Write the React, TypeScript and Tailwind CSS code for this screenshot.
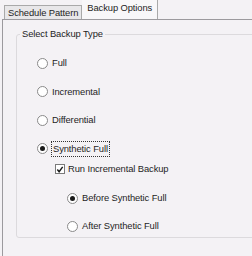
import React from "react";

function Radio({ checked }: { checked?: boolean }) {
  return (
    <span className="w-[11px] h-[11px] rounded-full border border-[#8a8a8a] bg-white flex items-center justify-center shrink-0">
      {checked && <span className="w-[5px] h-[5px] rounded-full bg-[#1a1a1a]" />}
    </span>
  );
}

function Check() {
  return (
    <span className="w-[10px] h-[10px] border border-[#7a7a7a] bg-white flex items-center justify-center shrink-0">
      <svg width="9" height="9" viewBox="0 0 9 9">
        <path d="M1.5 4.5L3.5 7L7.5 1.5" fill="none" stroke="#1a1a1a" strokeWidth="1.6" />
      </svg>
    </span>
  );
}

export default function App() {
  return (
    <div
      className="w-[252px] h-[256px] bg-[#f4f2f5] overflow-hidden text-[9.4px] tracking-[-0.1px] leading-[12px] text-[#1e1e1e] flex flex-col"
      style={{ fontFamily: "'Liberation Sans', Arial, sans-serif" }}
    >
      {/* Tabs */}
      <div className="h-[19px] flex items-end pl-[4px] shrink-0">
        <div className="h-[14px] px-[3px] border border-b-0 border-[#a9a9a9] bg-[#e8e7e9] flex items-center">
          Schedule Pattern
        </div>
        <div className="h-[20px] -mt-[1px] px-[5px] pb-[4px] border border-b-0 border-l-0 border-[#a9a9a9] bg-[#f8f7f9] flex items-center">
          Backup Options
        </div>
      </div>

      {/* Page */}
      <div className="flex-1 ml-[2px] border-t border-l border-[#9c9a9e] pt-[8px] pl-[13px]">
        <fieldset className="border border-[#dcdadd] rounded-[3px] w-[260px] h-[210px] pl-[3px]">
          <legend className="px-[2px]">Select Backup Type</legend>
          <div className="flex flex-col pt-[9px] -ml-[3px]">
            <div className="h-[28px] flex items-center gap-[4px] pl-[20px]">
              <Radio />
              <span>Full</span>
            </div>
            <div className="h-[29px] flex items-center gap-[4px] pl-[20px]">
              <Radio />
              <span>Incremental</span>
            </div>
            <div className="h-[28px] flex items-center gap-[4px] pl-[20px]">
              <Radio />
              <span>Differential</span>
            </div>
            <div className="h-[29px] flex items-center gap-[4px] pl-[20px]">
              <Radio checked />
              <span className="outline outline-1 outline-dotted outline-[#333] px-[1px] py-[1px]">Synthetic Full</span>
            </div>
            <div className="h-[12px] flex items-center gap-[3px] pl-[38px]">
              <Check />
              <span>Run Incremental Backup</span>
            </div>
            <div className="h-[28px] mt-[9px] flex items-center gap-[4px] pl-[50px]">
              <Radio checked />
              <span>Before Synthetic Full</span>
            </div>
            <div className="h-[28px] flex items-center gap-[4px] pl-[50px]">
              <Radio />
              <span>After Synthetic Full</span>
            </div>
          </div>
        </fieldset>
      </div>
    </div>
  );
}
